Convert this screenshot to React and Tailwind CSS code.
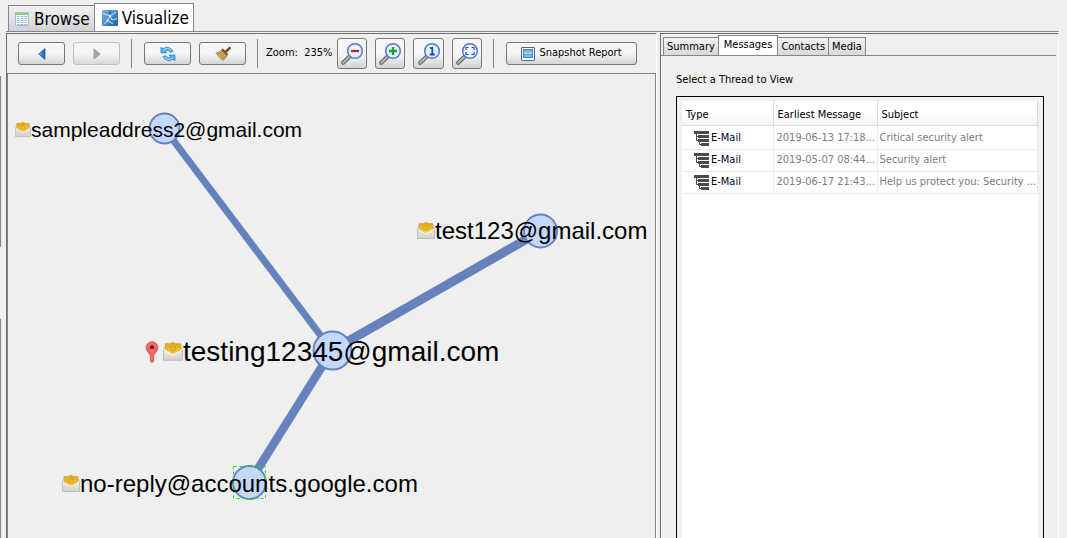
import React from 'react';

const UI = "font-['DejaVu_Sans_Condensed','DejaVu_Sans',sans-serif]";

function TableIcon() {
  return (
    <svg width="14" height="14" viewBox="0 0 14 14" aria-hidden="true">
      <rect x=".5" y=".5" width="13" height="13" fill="#fff" stroke="#9dbbdd" />
      <rect x="1" y="1" width="12" height="2" fill="#8fce79" />
      <path d="M2 4.5h10M2 6.5h10M2 8.5h10M2 10.5h10M2 12.5h10" stroke="#8fb4dc" />
      <path d="M5 4v9M9 4v9" stroke="#fff" />
    </svg>
  );
}

function GraphIcon() {
  return (
    <svg width="16" height="16" viewBox="0 0 16 16" aria-hidden="true">
      <defs>
        <linearGradient id="cube" x1="0" y1="0" x2="1" y2="1">
          <stop offset="0" stopColor="#7db5e8" />
          <stop offset="1" stopColor="#1c5da8" />
        </linearGradient>
      </defs>
      <rect width="16" height="16" rx="1" fill="url(#cube)" />
      <path d="M1 3.500L8 6L14 2M8 6L5.500 10.500L2 14.500M5.500 10.500L11 14M8 6L10 10L15 8.500" stroke="#cfe6fa" fill="none" />
      <path d="M6 1.500l4 0-2 4z" fill="#2d70bb" />
      <circle cx="8" cy="6" r="1.100" fill="#fff" />
      <circle cx="5.500" cy="10.500" r="1.100" fill="#e8f4ff" />
    </svg>
  );
}

function Arrow({ dir }) {
  return (
    <svg width="8" height="12" viewBox="0 0 8 12" aria-hidden="true">
      <defs>
        <linearGradient id="blueArrow" x1="0" y1="0" x2="1" y2="0">
          <stop offset="0" stopColor="#79b1ee" />
          <stop offset="1" stopColor="#1e50b8" />
        </linearGradient>
      </defs>
      {dir === 'left' ? (
        <path d="M7 .5V11.500L.7 6z" fill="url(#blueArrow)" stroke="#2b5fc0" strokeWidth=".8" />
      ) : (
        <path d="M.5 .2V11.800L7.800 6z" fill="#8e8e8e" />
      )}
    </svg>
  );
}

function RefreshIcon() {
  return (
    <svg width="16" height="16" viewBox="0 0 16 16" aria-hidden="true">
      <g fill="#58b4ef" stroke="#2583cb" strokeWidth=".8" strokeLinejoin="round">
        <path d="M1 1.200L3 3C6 .4 11 1 13 5.500L10.300 6.300C9 4 6.800 3.800 5.200 5L7 6.900H1z" />
        <path d="M15 14.800L13 13C10 15.600 5 15 3 10.500L5.700 9.700C7 12 9.200 12.200 10.800 11L9 9.100H15z" />
      </g>
      <path d="M3.600 4C6.500 1.800 9.500 2.200 11.400 4.800M12.400 12C9.500 14.200 6.500 13.800 4.600 11.200" fill="none" stroke="#b7e2fb" strokeWidth=".9" />
    </svg>
  );
}

function BroomIcon() {
  return (
    <svg width="16" height="16" viewBox="0 0 16 16" aria-hidden="true">
      <path d="M14.800 2L11 5.500" stroke="#7b4a2a" strokeWidth="2.400" strokeLinecap="round" />
      <path d="M8 2.800L13 8.200L11.500 9.800L6.300 4.300z" fill="#8a5a3c" stroke="#6b3f24" strokeWidth=".6" />
      <path d="M6.200 4.200L11.700 9.800C11 12 9.500 13.500 7.500 14.300L.8 7C3 6.800 4.800 6 6.200 4.200z" fill="#dcb56a" stroke="#9a7434" strokeWidth=".8" />
      <path d="M7 5.800L3 8.500M8 7L4.800 10.200M9.200 8.200L6.500 12M10.300 9.400L8 13.200" stroke="#8d6a2f" strokeWidth=".7" />
    </svg>
  );
}

function Magnifier({ kind }) {
  return (
    <svg width="24" height="24" viewBox="0 0 24 24" className="shrink-0" aria-hidden="true">
      <path d="M3.200 20.800L10 14.200" stroke="#666" strokeWidth="4.200" strokeLinecap="round" />
      <path d="M3.200 20.800L10 14.200" stroke="#b5b5b5" strokeWidth="2" strokeLinecap="round" />
      <circle cx="15" cy="9" r="7.300" fill="#e0effc" stroke="#5576cc" strokeWidth="1.500" />
      <path d="M10 6.500A6 6 0 0 1 20 6.500Q15 9 10 6.500" fill="#f6fbff" />
      {kind === 'out' && <path d="M11 9h8" stroke="#cc1f25" strokeWidth="2.200" />}
      {kind === 'in' && <path d="M11 9h8M15 5v8" stroke="#16a832" strokeWidth="2.400" />}
      {kind === 'one' && <path d="M12.800 6.200L15.300 5.800V13M12.800 12.500h5" fill="none" stroke="#2547a8" strokeWidth="1.800" />}
      {kind === 'fit' && <path d="M13.500 5.500h-2.500v2.500M16.500 5.500h2.500v2.500M13.500 12.500h-2.500v-2.500M16.500 12.500h2.500v-2.500" fill="none" stroke="#2b4fae" strokeWidth="1.200" />}
    </svg>
  );
}

function SnapshotIcon() {
  return (
    <svg width="14" height="14" viewBox="0 0 14 14" className="shrink-0" aria-hidden="true">
      <defs>
        <linearGradient id="sky" x1="0" y1="0" x2="0" y2="1">
          <stop offset="0" stopColor="#5b9ddb" />
          <stop offset=".5" stopColor="#a5d3f4" />
          <stop offset=".6" stopColor="#64a9e2" />
          <stop offset="1" stopColor="#87c3ee" />
        </linearGradient>
      </defs>
      <rect x=".5" y=".5" width="13" height="13" rx=".5" fill="#fff" stroke="#3f66ab" />
      <rect x="2.500" y="2.500" width="9" height="8" fill="url(#sky)" stroke="#5584bf" />
    </svg>
  );
}

function Envelope({ size }) {
  return (
    <svg width={size} height={size} viewBox="0 0 18 18" aria-hidden="true" className="shrink-0">
      <defs>
        <linearGradient id="paper" x1="0" y1="0" x2="0" y2="1">
          <stop offset="0" stopColor="#f5f5f5" />
          <stop offset="1" stopColor="#cfcfcf" />
        </linearGradient>
        <linearGradient id="gold" x1="0" y1="0" x2="0" y2="1">
          <stop offset="0" stopColor="#dfa21c" />
          <stop offset="1" stopColor="#f6d650" />
        </linearGradient>
      </defs>
      <path d="M.5 6.500L2.500 3.500h13l2 3V16.500H.5z" fill="url(#paper)" stroke="#b4b4b4" strokeWidth=".8" />
      <path d="M2 1.500H6.500L9 .4L11.500 1.500H16V7.500L9 12L2 7.500z" fill="url(#gold)" stroke="#cf9d22" strokeWidth=".6" />
      <circle cx="9" cy="5.800" r="2.300" fill="none" stroke="#c99a1d" strokeWidth=".7" />
      <path d="M.8 7L8 11.500Q9 12.200 10 11.500L17.200 7" fill="none" stroke="#fff" strokeWidth="1" />
    </svg>
  );
}

function Pin() {
  return (
    <svg width="14" height="22" viewBox="0 0 14 22" aria-hidden="true">
      <path d="M7 .7A6 6 0 0 1 13 6.700C13 10 9.200 12.500 8.600 15.500V20.500L7 21.500L5.400 20.500V15.500C4.800 12.500 1 10 1 6.700A6 6 0 0 1 7 .7z" fill="#ee6a6a" stroke="#d95353" strokeWidth=".8" />
      <circle cx="7" cy="6.200" r="2" fill="#6e2626" />
    </svg>
  );
}

function ThreadIcon() {
  return (
    <svg width="15" height="16" viewBox="0 0 15 16" aria-hidden="true" className="shrink-0">
      <g fill="#4b4b4b">
        <rect x="0" y="1" width="15" height="3" />
        <rect x="4" y="5" width="11" height="3" />
        <rect x="4" y="9" width="11" height="3" />
        <rect x="7" y="13" width="8" height="3" />
      </g>
      <path d="M2.500 3v7.500h2M5.500 11v3.500h2M2.500 6.500h2" fill="none" stroke="#4b4b4b" />
    </svg>
  );
}

function ToolButton({ label, className, disabled, children }) {
  return (
    <button
      type="button"
      aria-label={label}
      disabled={disabled}
      className={`flex shrink-0 items-center justify-center rounded-[3px] border bg-linear-to-b from-[#f6f6f6] from-50% to-[#d4d4d4] ${
        disabled ? 'border-[#b4b4b4] opacity-80' : 'border-[#777]'
      } ${className}`}
    >
      {children}
    </button>
  );
}

function Divider({ className }) {
  return <div className={`h-[29px] w-px shrink-0 bg-[#848484] ${className}`} />;
}

const labels = [
  { text: 'sampleaddress2@gmail.com', pos: 'left-[7px] top-[42px]', size: 'text-[21px] leading-[28px]', icon: 16 },
  { text: 'test123@gmail.com', pos: 'left-[409px] top-[143px]', size: 'text-[24px] leading-[28px]', icon: 18 },
  { text: 'testing12345@gmail.com', pos: 'left-[137px] top-[264px]', size: 'text-[28px] leading-[28px]', icon: 20, pin: true },
  { text: 'no-reply@accounts.google.com', pos: 'left-[54px] top-[396px]', size: 'text-[24px] leading-[28px]', icon: 18 },
];

function Graph() {
  return (
    <div className="relative min-h-0 flex-1 overflow-hidden border-t border-r border-l border-[#82858f]">
      <svg className="absolute top-0 left-0" width="640" height="464" viewBox="8 74 640 464" aria-hidden="true">
        <g stroke="#6682bc">
          <path d="M164 128L332 350.500" strokeWidth="7" />
          <path d="M541 231L332 350.500" strokeWidth="9" />
          <path d="M249.500 482.500L332 350.500" strokeWidth="8.500" />
        </g>
        <g fill="#c3d7ff" stroke="#6682bc" strokeWidth="2">
          <circle cx="164.500" cy="128.500" r="15" />
          <circle cx="540.500" cy="231" r="16.500" />
          <circle cx="332.500" cy="350.500" r="19" />
          <circle cx="249.500" cy="482.500" r="16.500" />
        </g>
        <rect x="233.500" y="466.500" width="32" height="32" fill="none" stroke="#00f000" strokeDasharray="3 3" />
      </svg>
      {labels.map((l) => (
        <div
          key={l.text}
          className={`absolute flex items-center font-['Liberation_Sans',Arial,sans-serif] whitespace-nowrap text-black ${l.pos} ${l.size}`}
        >
          {l.pin && <span className="mr-1"><Pin /></span>}
          <Envelope size={l.icon} />
          <span>{l.text}</span>
        </div>
      ))}
    </div>
  );
}

const threads = [
  ['2019-06-13 17:18...', 'Critical security alert'],
  ['2019-05-07 08:44...', 'Security alert'],
  ['2019-06-17 21:43...', 'Help us protect you: Security ...'],
];

function SideTab({ active, children }) {
  return (
    <button
      type="button"
      role="tab"
      aria-selected={!!active}
      className={`-ml-px border border-b-0 border-[#82858f] text-[11px] leading-4 ${
        active ? 'h-5 bg-white px-[5px] pb-0.5' : 'h-[18px] bg-linear-to-b from-[#f2f2f2] to-[#d9d9d9] px-[3px]'
      }`}
    >
      {children}
    </button>
  );
}

function MessagesPanel() {
  return (
    <section className="flex min-h-0 w-[399px] shrink-0 flex-col border-t border-r border-l border-t-[#6e6e6e] border-r-white border-l-[#6e6e6e]">
      <div role="tablist" className="flex h-[21px] items-end pl-[3px]">
        <SideTab>Summary</SideTab>
        <SideTab active>Messages</SideTab>
        <SideTab>Contacts</SideTab>
        <SideTab>Media</SideTab>
      </div>
      <div className="mr-0.5 flex min-h-0 flex-1 flex-col border-t border-[#82858f] pr-3 pl-[15px]">
        <h2 className="mt-4 mb-2 text-[11px] leading-4">Select a Thread to View</h2>
        <div className="min-h-0 flex-1 border border-b-0 border-black px-[5px] pt-1">
          <div className="h-full bg-white">
            <table className="w-full table-fixed border-collapse text-left text-[11px]">
              <colgroup>
                <col className="w-[91px]" />
                <col className="w-[104px]" />
                <col />
              </colgroup>
              <thead>
                <tr className="h-6 bg-linear-to-b from-white from-50% to-[#f3f4f6] whitespace-nowrap">
                  <th className="border-r border-b border-[#dcdcdc] px-1 pt-1 font-normal">Type</th>
                  <th className="border-r border-b border-[#dcdcdc] px-1 pt-1 font-normal">Earliest Message</th>
                  <th className="border-r border-b border-[#dcdcdc] px-1 pt-1 font-normal">Subject</th>
                </tr>
              </thead>
              <tbody>
                {threads.map(([date, subject]) => (
                  <tr key={date} className="h-[22px] whitespace-nowrap first:h-6 first:*:pt-0.5">
                    <td className="border-r border-b border-[#ececec]">
                      <span className="flex items-center pl-3 text-[#000033]">
                        <ThreadIcon />
                        <span className="pl-0.5">E-Mail</span>
                      </span>
                    </td>
                    <td className="border-r border-b border-[#ececec] pl-[3px] text-[#7c7c7c]">{date}</td>
                    <td className="border-r border-b border-[#ececec] pl-0.5 text-[#7c7c7c]">{subject}</td>
                  </tr>
                ))}
              </tbody>
            </table>
          </div>
        </div>
      </div>
    </section>
  );
}

export default function App() {
  return (
    <div className={`flex h-screen overflow-hidden bg-[#efefef] text-black ${UI}`}>
      <div className="flex w-1.5 shrink-0 flex-col pt-[76px]">
        <div className="h-[171px] w-px bg-[#82858f]" />
        <div className="mt-[72px] w-px flex-1 bg-[#82858f]" />
      </div>
      <div className="mr-2 flex min-h-0 min-w-0 flex-1 flex-col">
        <div role="tablist" className="flex h-[31px] shrink-0 items-end pl-0.5">
          <button type="button" role="tab" aria-selected="false" className="flex h-[26px] items-center gap-[5px] border border-b-0 border-[#82858f] bg-linear-to-b from-[#f2f2f2] to-[#d2d2d2] px-1 pl-1.5 text-[17px] leading-5">
            <TableIcon />
            <span>Browse</span>
          </button>
          <button type="button" role="tab" aria-selected="true" className="-ml-px flex h-7 items-center gap-1 border border-b-0 border-[#82858f] bg-white pr-1 pl-[7px] text-[17px] leading-5">
            <GraphIcon />
            <span>Visualize</span>
          </button>
        </div>
        <div className="h-[2px] shrink-0 border-t border-[#82858f]" />
        <main className="flex min-h-0 flex-1">
          <section className="flex min-w-0 flex-1 flex-col border-t border-r border-l border-t-[#6e6e6e] border-r-white border-l-[#6e6e6e]">
            <div className="flex h-[39px] shrink-0 items-center pl-[11px] text-[11px]">
              <ToolButton label="Back" className="h-[23px] w-[47px]"><Arrow dir="left" /></ToolButton>
              <ToolButton label="Forward" disabled className="ml-2 h-[23px] w-[47px]"><Arrow dir="right" /></ToolButton>
              <Divider className="ml-[11px]" />
              <ToolButton label="Refresh" className="ml-3 h-[23px] w-[47px]"><RefreshIcon /></ToolButton>
              <ToolButton label="Clear" className="ml-2 h-[23px] w-[47px]"><BroomIcon /></ToolButton>
              <Divider className="ml-[11px]" />
              <span className="ml-2 w-[71px] shrink-0 whitespace-pre">{'Zoom:  235%'}</span>
              <div className="flex gap-2">
                <ToolButton label="Zoom out" className="h-[31px] w-[30px]"><Magnifier kind="out" /></ToolButton>
                <ToolButton label="Zoom in" className="h-[31px] w-[30px]"><Magnifier kind="in" /></ToolButton>
                <ToolButton label="Actual size" className="h-[31px] w-[31px]"><Magnifier kind="one" /></ToolButton>
                <ToolButton label="Fit to window" className="h-[31px] w-[30px]"><Magnifier kind="fit" /></ToolButton>
              </div>
              <Divider className="ml-[11px]" />
              <ToolButton className="ml-3 h-[23px] w-[131px] gap-1">
                <SnapshotIcon />
                <span className="whitespace-nowrap">Snapshot Report</span>
              </ToolButton>
            </div>
            <Graph />
          </section>
          <div className="w-[3px] shrink-0" />
          <MessagesPanel />
        </main>
      </div>
    </div>
  );
}
